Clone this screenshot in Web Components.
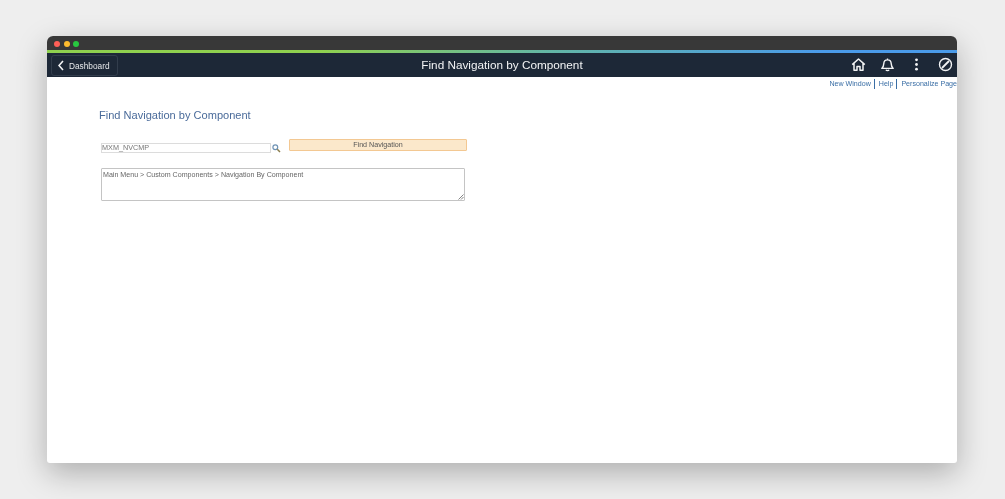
<!DOCTYPE html>
<html lang="en">
<head>
<meta charset="utf-8">
<title>Find Navigation by Component</title>
<style>
  html, body { margin: 0; height: 100%; }
  body {
    background: #eeeeee;
    font-family: "Liberation Sans", Arial, sans-serif;
    overflow: hidden;
  }
</style>
</head>
<body>
<browser-window>
  <nav-header title-text="Find Navigation by Component"></nav-header>
  <link-bar></link-bar>
  <find-page></find-page>
</browser-window>

<script>
class BrowserWindow extends HTMLElement {
  constructor() {
    super();
    this.attachShadow({ mode: "open" });
    this.shadowRoot.innerHTML = `
      <style>
        :host {
          display: flex;
          flex-direction: column;
          width: 910px;
          height: 427px;
          margin: 36px 0 0 47px;
          background: #fff;
          border-radius: 6px 6px 3px 3px;
          overflow: hidden;
          box-shadow: 0 10px 30px rgba(0, 0, 0, 0.27);
          filter: blur(0.3px);
        }
        .chrome {
          flex: none;
          display: flex;
          align-items: center;
          gap: 3.5px;
          height: 14px;
          padding: 1px 0 0 7px;
          box-sizing: border-box;
          background: #383838;
        }
        .dot { width: 6px; height: 6px; border-radius: 50%; }
        .gradient {
          flex: none;
          height: 3px;
          background: linear-gradient(90deg, #8fd14f 0%, #8fd14f 30%, #63b6a6 55%, #4a9bea 85%, #4a9bea 100%);
        }
      </style>
      <div class="chrome">
        <span class="dot" style="background:#ff5f57"></span>
        <span class="dot" style="background:#febc2e"></span>
        <span class="dot" style="background:#28c840"></span>
      </div>
      <div class="gradient"></div>
      <slot></slot>
    `;
  }
}

class NavHeader extends HTMLElement {
  constructor() {
    super();
    this.attachShadow({ mode: "open" });
    this.shadowRoot.innerHTML = `
      <style>
        :host {
          display: grid;
          grid-template-columns: 1fr auto 1fr;
          align-items: center;
          height: 24px;
          padding: 0 4px 0 4px;
          background: #1d2837;
          color: #fff;
        }
        .back {
          justify-self: start;
          display: flex;
          align-items: center;
          gap: 5px;
          box-sizing: border-box;
          width: 67px;
          height: 21px;
          margin-top: 1px;
          padding-left: 6px;
          border: 1px solid #323d4c;
          border-radius: 3px;
          font-size: 8.3px;
          color: #e6e8ea;
        }
        .title { font-size: 11.75px; color: #f2f3f4; margin-top: -2px; }
        .icons { justify-self: end; display: flex; align-items: center; gap: 14px; margin-top: -1px; }
        svg { display: block; fill: none; stroke: #f2f3f4; }
      </style>
      <div class="back">
        <svg width="6" height="11" viewBox="0 0 6 11" stroke-width="1.6"><path d="M5 1 1 5.5 5 10"/></svg>
        <span>Dashboard</span>
      </div>
      <div class="title"></div>
      <div class="icons">
        <svg width="15" height="15" viewBox="0 0 15 15" stroke-width="1.5" stroke-linejoin="round"><path d="M1.2 7.6 7.5 2 13.8 7.6M3 6.4V13.2H6V9.6H9V13.2H12V6.4"/></svg>
        <svg width="15" height="15" viewBox="0 0 15 15" stroke-width="1.4" stroke-linejoin="round"><path d="M1.8 11.4C3.5 9.8 3.7 8.6 3.8 6.6 3.9 4.2 5.5 2.9 7.5 2.9S11.1 4.2 11.2 6.6C11.3 8.6 11.5 9.8 13.2 11.4ZM7.5 1.4V2.9M6 12.8C6.4 13.9 8.6 13.9 9 12.8"/></svg>
        <svg width="15" height="15" viewBox="0 0 15 15" style="fill:#f2f3f4;stroke:none"><circle cx="7.5" cy="2.8" r="1.4"/><circle cx="7.5" cy="7.5" r="1.4"/><circle cx="7.5" cy="12.2" r="1.4"/></svg>
        <svg width="15" height="15" viewBox="0 0 15 15" stroke-width="1.4"><circle cx="7.5" cy="7.5" r="6"/><path d="M4 11 11 4" stroke-width="1.8"/></svg>
      </div>
    `;
  }

  connectedCallback() {
    this.shadowRoot.querySelector(".title").textContent = this.getAttribute("title-text");
  }
}

class LinkBar extends HTMLElement {
  constructor() {
    super();
    this.attachShadow({ mode: "open" });
    this.shadowRoot.innerHTML = `
      <style>
        :host {
          display: flex;
          justify-content: flex-end;
          align-items: center;
          height: 13px;
          font-size: 7.1px;
          color: #3a6ea5;
          white-space: nowrap;
        }
        span + span { margin-left: 3px; padding-left: 4px; border-left: 1px solid #3a6ea5; line-height: 10px; }
      </style>
      <span>New Window</span><span>Help</span><span>Personalize Page</span>
    `;
  }
}

class FindPage extends HTMLElement {
  constructor() {
    super();
    this.attachShadow({ mode: "open" });
    this.shadowRoot.innerHTML = `
      <style>
        :host {
          display: block;
          padding: 17px 0 0 52px;
        }
        h1 {
          margin: 0;
          height: 16px;
          line-height: 16px;
          font-size: 11.05px;
          font-weight: normal;
          color: #4a6b9a;
        }
        .row {
          display: flex;
          align-items: flex-start;
          margin: 16px 0 0 2px;
        }
        .field {
          box-sizing: border-box;
          width: 170px;
          height: 10px;
          margin-top: 4px;
          border: 1px solid #dcdcdc;
          font-size: 7.25px;
          line-height: 8.5px;
          color: #777;
        }
        .search { margin: 5px 0 0 1px; display: block; }
        .btn {
          box-sizing: border-box;
          width: 178px;
          height: 12px;
          margin-left: 8px;
          border: 1px solid #f3c892;
          border-radius: 1px;
          background: #fbe8cb;
          font-size: 7.15px;
          line-height: 10px;
          text-align: center;
          color: #555;
        }
        .result {
          position: relative;
          box-sizing: border-box;
          width: 364px;
          height: 33px;
          margin: 15px 0 0 2px;
          padding: 1px 1px;
          border: 1px solid #c4c4c4;
          border-radius: 1px;
          font-size: 7.1px;
          line-height: 10px;
          color: #666;
        }
        .grip { position: absolute; right: 0; bottom: 0; display: block; }
      </style>
      <h1>Find Navigation by Component</h1>
      <div class="row">
        <div class="field">MXM_NVCMP</div>
        <svg class="search" width="9" height="9" viewBox="0 0 9 9" fill="none"><circle cx="3.3" cy="3.3" r="2.4" stroke="#6f93b5" stroke-width="1.2"/><path d="M5.3 5.3 8 8" stroke="#8a7d4c" stroke-width="1.5"/></svg>
        <div class="btn">Find Navigation</div>
      </div>
      <div class="result">Main Menu &gt; Custom Components &gt; Navigation By Component
        <svg class="grip" width="6" height="6" viewBox="0 0 6 6" stroke="#666" stroke-width="0.8"><path d="M0.5 5.5 5.5 0.5M3 5.5 5.5 3"/></svg>
      </div>
    `;
  }
}

customElements.define("browser-window", BrowserWindow);
customElements.define("nav-header", NavHeader);
customElements.define("link-bar", LinkBar);
customElements.define("find-page", FindPage);
</script>
</body>
</html>
